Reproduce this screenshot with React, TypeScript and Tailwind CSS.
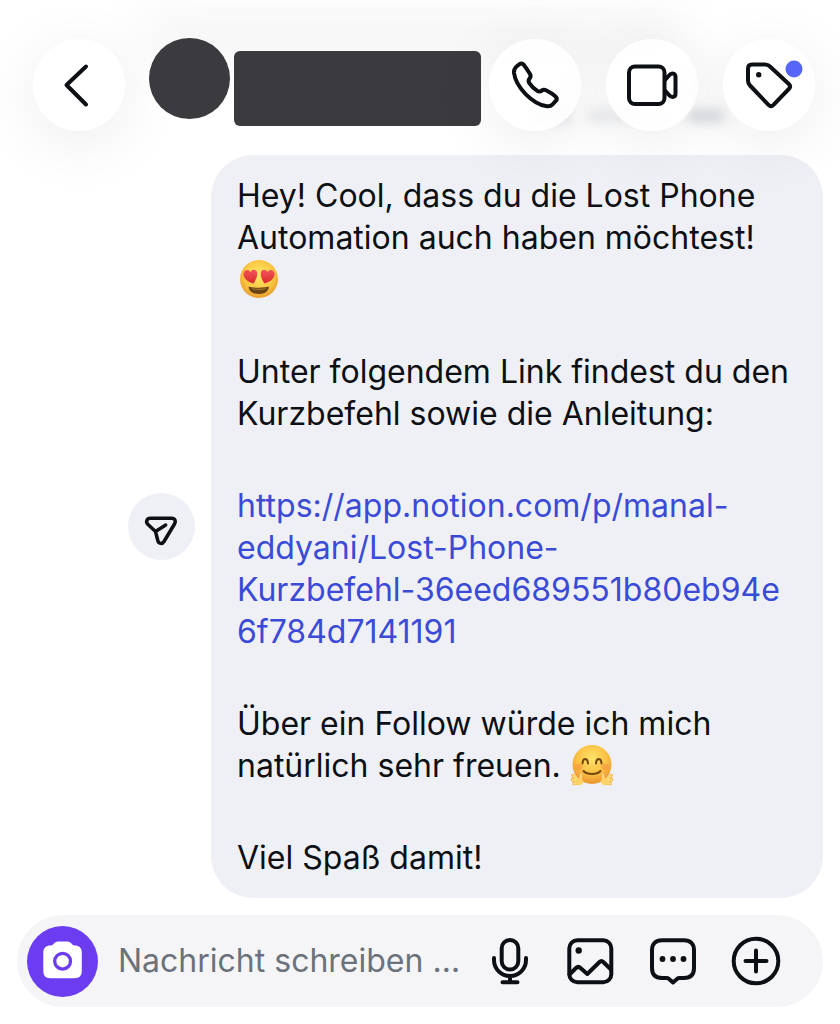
import React from 'react'

const strokeProps = {
  fill: 'none',
  stroke: '#0c1014',
  strokeWidth: 4,
  strokeLinecap: 'round' as const,
  strokeLinejoin: 'round' as const,
}

const HeartEyes = () => (
  <svg role="img" aria-label="Herzaugen" viewBox="0 0 40 40" className="inline-block w-10 h-10 ml-0.5 align-bottom">
    <defs>
      <radialGradient id="face" cx="0.5" cy="0.4" r="0.62">
        <stop offset="0" stopColor="#ffe96b" />
        <stop offset="0.6" stopColor="#fbc945" />
        <stop offset="1" stopColor="#e89a2c" />
      </radialGradient>
      <linearGradient id="heart" x1="0" y1="0" x2="0" y2="1">
        <stop offset="0" stopColor="#f4545a" />
        <stop offset="1" stopColor="#d92a2c" />
      </linearGradient>
    </defs>
    <circle cx="20" cy="19" r="19" fill="url(#face)" />
    <path d="M9.500 26.500C14 28 26 28 30 26.500C29.500 31.500 25.500 34 20 34C14 34 10 31.500 9.500 26.500Z" fill="#6b4416" />
    <path d="M12.500 28C17 29 23 29 27.500 28C27 29.600 23.500 30 20 30C16.500 30 13 29.600 12.500 28Z" fill="#a0742a" />
    <path d="M14.500 23.500C9 22 4.200 18.500 4.500 13.500C5 9.500 9.500 8.800 11.500 12C13 8.500 18 9 18.300 13C18.500 17 16.500 20.500 14.500 23.500Z" fill="url(#heart)" />
    <path d="M25.500 23.500C31 22 35.800 18.500 35.500 13.500C35 9.500 30.500 8.800 28.500 12C27 8.500 22 9 21.700 13C21.500 17 23.500 20.500 25.500 23.500Z" fill="url(#heart)" />
  </svg>
)

const Hugging = () => (
  <svg role="img" aria-label="Umarmung" viewBox="0 0 44 42" className="inline-block w-11 h-[42px] align-bottom">
    <defs>
      <radialGradient id="hugFace" cx="0.5" cy="0.35" r="0.65">
        <stop offset="0" stopColor="#ffe469" />
        <stop offset="0.6" stopColor="#fbc044" />
        <stop offset="1" stopColor="#ea9431" />
      </radialGradient>
    </defs>
    <circle cx="22" cy="19.500" r="19.500" fill="url(#hugFace)" />
    <ellipse cx="8.500" cy="22" rx="4" ry="3" fill="#f58a3c" opacity="0.45" />
    <ellipse cx="35.500" cy="22" rx="4" ry="3" fill="#f58a3c" opacity="0.45" />
    <path d="M12.500 18.500C13 12.500 17.500 12.500 18 18.500M26 18.500C26.500 12.500 31 12.500 31.500 18.500M13.500 26C17.500 30 26.500 30 30.500 26" fill="none" stroke="#73450f" strokeWidth="2" strokeLinecap="round" />
    <g fill="none" stroke="#f0a640" strokeWidth="3.600" strokeLinecap="round">
      <path d="M9 36L3 30.500M9 37L2.500 34.500M9 38L4 38.500M10.500 36L11 29.500" />
      <path d="M35 36L41 30.500M35 37L41.500 34.500M35 38L40 38.500M33.500 36L33 29.500" />
    </g>
    <g fill="none" stroke="#fddc74" strokeWidth="2.400" strokeLinecap="round">
      <path d="M9 36L3 30.500M9 37L2.500 34.500M9 38L4 38.500M10.500 36L11 29.500" />
      <path d="M35 36L41 30.500M35 37L41.500 34.500M35 38L40 38.500M33.500 36L33 29.500" />
    </g>
    <circle cx="9.500" cy="36.500" r="3.600" fill="#fcd266" />
    <circle cx="34.500" cy="36.500" r="3.600" fill="#fcd266" />
  </svg>
)

const headerActions = [
  {
    label: 'Anrufen',
    icon: (
      <path d="M27 28L30 25.500C31.500 24 33.500 24.300 34.700 25.800C37 28.700 39 31.800 41 35C42 36.800 41.800 38 40.800 39.200C39.200 41 39.200 42.300 40.300 44.200C42.500 47.500 45.500 50.300 48.500 52C50 52.800 51.500 52.600 52.700 51.600C54 50.500 55.600 50.500 57 51.200C60.200 52.800 63.500 54.800 66.300 57.200C68 58.700 68.200 60.200 67 61.700L63.500 65.500C62 67 60.300 67.600 58 67.300C43 65 27 48 25 34C24.700 31.500 25.300 29.800 27 28Z" />
    ),
  },
  {
    label: 'Videoanruf',
    icon: (
      <>
        <rect x="23" y="27.500" width="35.500" height="37.500" rx="6" />
        <path d="M59 41L63 36.500C65.500 33.500 69.500 34 69.500 38V54.500C69.500 58.500 65.500 59 63 56L59 51.500" />
      </>
    ),
  },
  {
    label: 'Label',
    icon: (
      <>
        <path d="M29 25.500H42C44 25.500 45.500 26 47 27.500L65.800 45C67.300 46.500 67.300 48.500 65.800 50L50.500 65.800C49 67.300 47 67.300 45.500 65.800L27 46.500C25.500 45 25 43.500 25 41.500V29.500C25 27 26.500 25.500 29 25.500Z" />
        <circle cx="35.700" cy="35.800" r="2.700" fill="#0c1014" stroke="none" />
        <circle cx="71" cy="30" r="8.500" fill="#5566f8" stroke="none" />
      </>
    ),
  },
]

const composerActions = [
  {
    label: 'Foto',
    icon: (
      <>
        <rect x="4.300" y="4.300" width="42" height="42" rx="8" />
        <circle cx="13.700" cy="14.500" r="3.200" fill="#0c1014" stroke="none" />
        <path d="M4.500 38.500L11 32C12.500 30.500 14 30.500 15.500 32L22.300 38L34.500 26C35.800 24.700 37 24.700 38.300 26L46 33.500" />
      </>
    ),
  },
  {
    label: 'Antwortvorlagen',
    icon: (
      <>
        <path d="M14 4.300H36C42.500 4.300 46 8 46 14V32C46 38.500 42.500 42 36 42H31C30 42 29.500 42.300 29 43L25 46.500L21 43C20.500 42.300 20 42 19 42H14C7.500 42 4 38.500 4 32V14C4 8 7.500 4.300 14 4.300Z" />
        <g fill="#0c1014" stroke="none">
          <circle cx="14.500" cy="23" r="2.900" />
          <circle cx="25" cy="23" r="2.900" />
          <circle cx="35.500" cy="23" r="2.900" />
        </g>
      </>
    ),
  },
  {
    label: 'Mehr',
    icon: (
      <>
        <circle cx="25" cy="25" r="22.300" />
        <path d="M25 14.500V35.500M14.500 25H35.500" />
      </>
    ),
  },
]

const roundButton = 'shrink-0 w-[92px] h-[92px] rounded-full bg-white/90 shadow-[0_12px_64px_rgba(0,0,0,0.08)]'

const Header = () => (
  <header className="relative flex items-end justify-between pt-[38px] pl-[33px] pr-[25px]">
    {/* Soft traces of the messages scrolled under the bar */}
    <div aria-hidden="true" className="absolute top-5 left-36 right-40 h-8 bg-[#f0f0f2] blur-xl" />
    <div aria-hidden="true" className="absolute top-[110px] right-[116px] flex gap-5 blur-[6px]">
      <div className="w-9 h-3 bg-gray-400/40" />
      <div className="w-20 h-3 bg-gray-400/20" />
      <div className="w-9 h-3 bg-gray-400/40" />
    </div>

    <div className="relative flex flex-1 items-end gap-6">
      <button type="button" aria-label="Zurück" className={roundButton}>
        <svg viewBox="0 0 92 92" {...strokeProps}>
          <path d="M53 27.500L33.500 46L53 65.500" />
        </svg>
      </button>
      <div className="flex flex-1 h-[93px] pb-[5px] gap-1 mr-2">
        <div className="shrink-0 self-start w-[81px] h-[81px] rounded-full bg-[#3b3a3f]" />
        <div className="flex-1 self-end h-[75px] rounded-md bg-[#3b3a3f]" />
      </div>
    </div>

    <div className="relative flex gap-[25px]">
      {headerActions.map((action) => (
        <button key={action.label} type="button" aria-label={action.label} className={roundButton}>
          <svg viewBox="0 0 92 92" {...strokeProps}>{action.icon}</svg>
        </button>
      ))}
    </div>
  </header>
)

const Message = () => (
  <main className="flex items-center gap-4 pt-6 pl-32 pr-[17px]">
    <button type="button" aria-label="Weiterleiten" className="shrink-0 w-[67px] h-[67px] rounded-full bg-[#eff0f5]">
      <svg viewBox="0 0 67 67" {...strokeProps} strokeWidth={3.5}>
        <path d="M22.500 25.300H43.500C47 25.300 48.300 28 46.500 31L36 48.500C34.300 51.300 30.500 51 29.800 47.500L27.500 38.500L20 31.500C17.300 28.700 18.800 25.300 22.500 25.300ZM27.500 38.500L37.700 32" />
      </svg>
    </button>

    <article className="flex flex-1 flex-col gap-[50px] rounded-[42px] bg-[#eff0f5] px-[26px] pt-5 pb-[19px] text-[32px] leading-[42px] text-[#0c1014]">
      <p>
        Hey! Cool, dass du die Lost Phone Automation auch haben möchtest!
        <span className="flex h-[42px] items-center"><HeartEyes /></span>
      </p>
      <p>Unter folgendem Link findest du den Kurzbefehl sowie die Anleitung:</p>
      <a href="#notion" className="text-[#3a4bd8]">
        https://app.notion.com/p/manal-<br />
        eddyani/Lost-Phone-<br />
        Kurzbefehl-36eed689551b80eb94e<br />
        6f784d7141191
      </a>
      <p>
        Über ein Follow würde ich mich natürlich sehr freuen. <Hugging />
      </p>
      <p>Viel Spaß damit!</p>
    </article>
  </main>
)

const Composer = () => (
  <footer className="p-[17px]">
    <form className="flex items-center h-[92px] rounded-full bg-[#f5f5f7] pl-2.5 pr-[42px]">
      <button type="button" aria-label="Kamera" className="shrink-0 w-[71px] h-[71px] rounded-full bg-[#6c3df0]">
        <svg viewBox="0 0 71 71">
          <path d="M24 19.500C26.500 19.500 27 15.500 31 15.500H40.500C44.500 15.500 45 19.500 47.500 19.500C52.500 19.500 54.800 22 54.800 27V44.500C54.800 50 52.500 52.200 47.500 52.200H23.500C18.500 52.200 16.300 50 16.300 44.500V27C16.300 22 18.500 19.500 24 19.500Z" fill="#fff" />
          <circle cx="35.600" cy="35.200" r="7.900" fill="none" stroke="#6c3df0" strokeWidth="3.300" />
        </svg>
      </button>
      <input
        type="text"
        aria-label="Nachricht schreiben"
        placeholder="Nachricht schreiben …"
        className="flex-1 min-w-0 ml-5 bg-transparent text-[32px] leading-[42px] text-[#0c1014] placeholder:text-[#6b727b] outline-none"
      />
      <div className="flex shrink-0 items-center gap-[33px]">
        <button type="button" aria-label="Sprachnachricht" className="w-11 h-[50px]">
          <svg viewBox="3 0 44 50" {...strokeProps}>
            <rect x="16.700" y="4" width="16.600" height="29.500" rx="8.300" />
            <path d="M9 22V24A16 16 0 0 0 41 24V22M25 40V46.300M17.500 46.300H32.500" />
          </svg>
        </button>
        {composerActions.map((action) => (
          <button key={action.label} type="button" aria-label={action.label} className="w-[50px] h-[50px]">
            <svg viewBox="0 0 50 50" {...strokeProps}>{action.icon}</svg>
          </button>
        ))}
      </div>
    </form>
  </footer>
)

const App = () => {
  return (
    <div className="min-h-screen bg-white font-['Inter',sans-serif]">
      <Header />
      <Message />
      <Composer />
    </div>
  )
}

export default App
